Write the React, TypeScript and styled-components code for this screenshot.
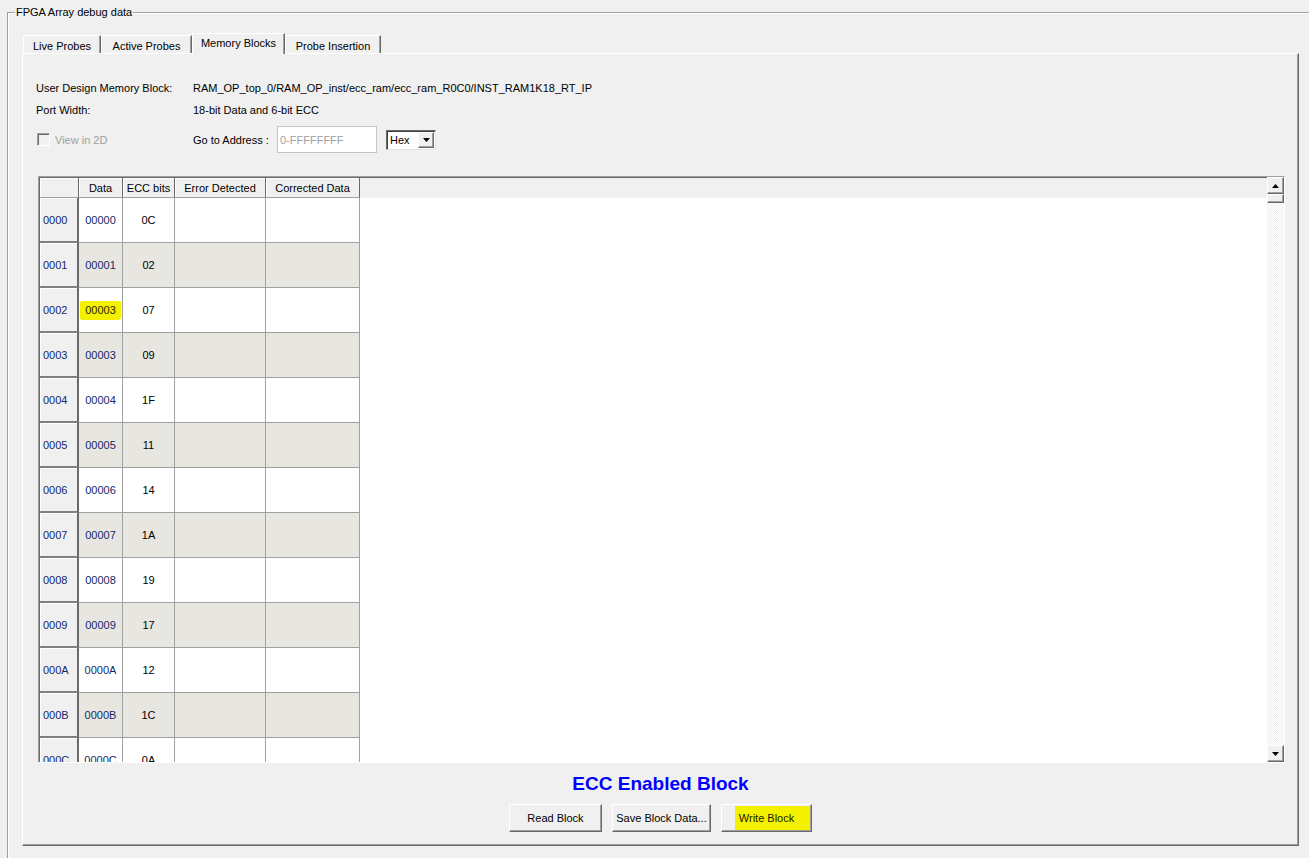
import React from "react";
import styled, { createGlobalStyle, css } from "styled-components";

const GlobalStyle = createGlobalStyle`
  html, body {
    margin: 0;
    padding: 0;
    background: #f0f0f0;
    height: 858px;
    overflow: hidden;
  }
  body {
    font-family: "Liberation Sans", Arial, sans-serif;
    font-size: 11px;
    color: #000;
  }
  * { box-sizing: border-box; }
`;

const Page = styled.div`
  padding: 12px 0 0 7px;
  height: 858px;
  overflow: hidden;
`;

const GroupBox = styled.div`
  position: relative;
  border-top: 1px solid #a0a0a0;
  border-left: 1px solid #a0a0a0;
  box-shadow: inset 1px 1px 0 #fff;
  padding: 20px 0 0 14px;
  min-height: 900px;
`;

const Legend = styled.div`
  position: absolute;
  top: -7px;
  left: 7px;
  padding: 0 1px;
  background: #f0f0f0;
  line-height: 13px;
`;

const TabStrip = styled.div`
  display: flex;
  align-items: flex-end;
  height: 20px;
  padding-left: 1px;
  position: relative;
  z-index: 1;
`;

const Tab = styled.div<{ $active?: boolean; $w: number }>`
  width: ${(p) => p.$w}px;
  height: ${(p) => (p.$active ? 21 : 18)}px;
  margin-bottom: ${(p) => (p.$active ? -1 : 0)}px;
  background: #f0f0f0;
  border-top: 1px solid #fff;
  border-left: 1px solid #fff;
  border-right: 1px solid #696969;
  box-shadow: inset -1px 0 0 #a0a0a0;
  display: flex;
  align-items: center;
  justify-content: center;
  padding-top: ${(p) => (p.$active ? 0 : 2)}px;
  padding-bottom: ${(p) => (p.$active ? 2 : 0)}px;
`;

const Panel = styled.div`
  width: 1277px;
  height: 793px;
  border-top: 1px solid #fff;
  border-left: 1px solid #fff;
  border-right: 1px solid #696969;
  border-bottom: 1px solid #696969;
  box-shadow: inset -1px -1px 0 #a0a0a0;
  display: flex;
  flex-direction: column;
`;

const InfoGrid = styled.div`
  display: grid;
  grid-template-columns: 157px auto;
  row-gap: 8px;
  margin: 27px 0 0 13px;
  line-height: 14px;
`;

const ControlsRow = styled.div`
  display: grid;
  grid-template-columns: 157px auto;
  align-items: center;
  height: 27px;
  margin: 9px 0 0 13px;
`;

const CheckLabel = styled.div`
  display: flex;
  align-items: center;
  gap: 5px;
  padding-left: 1px;
  color: #a0a0a0;
`;

const CheckBox = styled.span`
  width: 13px;
  height: 13px;
  background: #f0f0f0;
  border-top: 1px solid #a0a0a0;
  border-left: 1px solid #a0a0a0;
  border-right: 1px solid #fff;
  border-bottom: 1px solid #fff;
  box-shadow: inset 1px 1px 0 #696969;
`;

const AddressGroup = styled.div`
  display: flex;
  align-items: center;
`;

const AddrLabel = styled.span`
  width: 84px;
`;

const AddrInput = styled.div`
  width: 100px;
  height: 27px;
  background: #fff;
  border: 1px solid #c4c4c4;
  color: #a0a0a0;
  padding-left: 2px;
  display: flex;
  align-items: center;
`;

const Combo = styled.div`
  margin-left: 9px;
  width: 50px;
  height: 20px;
  background: #fff;
  border-top: 1px solid #696969;
  border-left: 1px solid #696969;
  border-right: 1px solid #e3e3e3;
  border-bottom: 1px solid #e3e3e3;
  box-shadow: inset 1px 1px 0 #404040;
  display: flex;
  align-items: center;
  justify-content: space-between;
  padding: 1px 1px 1px 3px;
`;

const raised = css`
  background: #f0f0f0;
  border-top: 1px solid #fff;
  border-left: 1px solid #fff;
  border-right: 1px solid #696969;
  border-bottom: 1px solid #696969;
  box-shadow: inset -1px -1px 0 #a0a0a0;
`;

const ArrowBtn = styled.div<{ $w?: number; $h?: number }>`
  ${raised};
  width: ${(p) => p.$w ?? 16}px;
  height: ${(p) => p.$h ?? 16}px;
  display: flex;
  align-items: center;
  justify-content: center;
  flex-shrink: 0;
`;

const GridFrame = styled.div`
  margin: 23px 0 0 15px;
  width: 1247px;
  height: 587px;
  border-top: 1px solid #a0a0a0;
  border-left: 1px solid #a0a0a0;
  border-right: 1px solid #fff;
  border-bottom: 1px solid #fff;
  display: flex;
`;

const TableArea = styled.div`
  flex: 1;
  overflow: hidden;
  background: #fff;
  border-top: 1px solid #696969;
  border-left: 1px solid #696969;
`;

const cols = "39px 44px 52px 91px 94px";

const HeadRow = styled.div`
  display: grid;
  grid-template-columns: ${cols};
  height: 20px;
  background: #f0f0f0;
`;

const HeadCell = styled.div`
  background: #f0f0f0;
  box-shadow: inset 1px 1px 0 #fff;
  border-right: 1px solid #696969;
  border-bottom: 1px solid #a0a0a0;
  display: flex;
  align-items: center;
  justify-content: center;
`;

const BodyRow = styled.div`
  display: grid;
  grid-template-columns: ${cols};
  height: 45px;
`;

const RowHead = styled.div`
  background: #f0f0f0;
  box-shadow: inset 1px 1px 0 #fff;
  border-right: 2px solid #696969;
  border-bottom: 2px solid #808080;
  display: flex;
  align-items: center;
  padding-left: 3px;
  color: #14286a;
`;

const Cell = styled.div<{ $alt?: boolean; $blue?: boolean }>`
  background: ${(p) => (p.$alt ? "#e8e6e1" : "#fff")};
  border-right: 1px solid #a0a0a0;
  border-bottom: 1px solid #a0a0a0;
  display: flex;
  align-items: center;
  justify-content: center;
  color: ${(p) => (p.$blue ? "#14286a" : "#000")};
`;

const Marked = styled.span`
  background: #f3f000;
  padding: 3px 5px 4px;
  border-radius: 2px 1px 3px 2px;
  color: #2a2a00;
`;

const ScrollBar = styled.div`
  width: 17px;
  display: flex;
  flex-direction: column;
  background: repeating-conic-gradient(#ffffff 0 25%, #f0f0f0 0 50%) 0 0 / 2px 2px;
`;

const Track = styled.div`
  flex: 1;
`;

const Thumb = styled.div`
  ${raised};
  height: 9px;
`;

const Title = styled.div`
  margin-top: 10px;
  text-align: center;
  color: #0000ff;
  font-weight: bold;
  font-size: 19px;
  line-height: 22px;
`;

const ButtonRow = styled.div`
  display: flex;
  justify-content: center;
  gap: 10px;
  margin-top: 9px;
`;

const Button = styled.div<{ $w: number; $marked?: boolean }>`
  ${raised};
  width: ${(p) => p.$w}px;
  height: 28px;
  display: flex;
  align-items: center;
  justify-content: center;
  ${(p) =>
    p.$marked &&
    css`
      background: linear-gradient(#f3f000, #f3f000) 13px 1px / calc(100% - 14px) calc(100% - 2px) no-repeat, #f0f0f0;
      color: #1a1a00;
    `}
`;

const Tri = ({ up }: { up?: boolean }) => (
  <svg width="7" height="4" viewBox="0 0 7 4">
    {up ? <polygon points="0,4 7,4 3.5,0" fill="#000" /> : <polygon points="0,0 7,0 3.5,4" fill="#000" />}
  </svg>
);

const rows: [string, string, string][] = [
  ["0000", "00000", "0C"],
  ["0001", "00001", "02"],
  ["0002", "00003", "07"],
  ["0003", "00003", "09"],
  ["0004", "00004", "1F"],
  ["0005", "00005", "11"],
  ["0006", "00006", "14"],
  ["0007", "00007", "1A"],
  ["0008", "00008", "19"],
  ["0009", "00009", "17"],
  ["000A", "0000A", "12"],
  ["000B", "0000B", "1C"],
  ["000C", "0000C", "0A"],
];

export default function App() {
  return (
    <Page>
      <GlobalStyle />
      <GroupBox>
        <Legend>FPGA Array debug data</Legend>
        <TabStrip>
          <Tab $w={78}>Live Probes</Tab>
          <Tab $w={91}>Active Probes</Tab>
          <Tab $w={93} $active>Memory Blocks</Tab>
          <Tab $w={96}>Probe Insertion</Tab>
        </TabStrip>
        <Panel>
          <InfoGrid>
            <span>User Design Memory Block:</span>
            <span>RAM_OP_top_0/RAM_OP_inst/ecc_ram/ecc_ram_R0C0/INST_RAM1K18_RT_IP</span>
            <span>Port Width:</span>
            <span>18-bit Data and 6-bit ECC</span>
          </InfoGrid>
          <ControlsRow>
            <CheckLabel>
              <CheckBox />
              View in 2D
            </CheckLabel>
            <AddressGroup>
              <AddrLabel>Go to Address :</AddrLabel>
              <AddrInput>0-FFFFFFFF</AddrInput>
              <Combo>
                <span>Hex</span>
                <ArrowBtn $w={16} $h={16}>
                  <Tri />
                </ArrowBtn>
              </Combo>
            </AddressGroup>
          </ControlsRow>
          <GridFrame>
            <TableArea>
              <HeadRow>
                <HeadCell />
                <HeadCell>Data</HeadCell>
                <HeadCell>ECC bits</HeadCell>
                <HeadCell>Error Detected</HeadCell>
                <HeadCell>Corrected Data</HeadCell>
              </HeadRow>
              {rows.map(([addr, data, ecc], i) => {
                const alt = i % 2 === 1;
                return (
                  <BodyRow key={addr}>
                    <RowHead>{addr}</RowHead>
                    <Cell $alt={alt} $blue>
                      {i === 2 ? <Marked>{data}</Marked> : data}
                    </Cell>
                    <Cell $alt={alt}>{ecc}</Cell>
                    <Cell $alt={alt} />
                    <Cell $alt={alt} />
                  </BodyRow>
                );
              })}
            </TableArea>
            <ScrollBar>
              <ArrowBtn $w={17} $h={17}>
                <Tri up />
              </ArrowBtn>
              <Thumb />
              <Track />
              <ArrowBtn $w={17} $h={17}>
                <Tri />
              </ArrowBtn>
            </ScrollBar>
          </GridFrame>
          <Title>ECC Enabled Block</Title>
          <ButtonRow>
            <Button $w={93}>Read Block</Button>
            <Button $w={99}>Save Block Data...</Button>
            <Button $w={91} $marked>
              Write Block
            </Button>
          </ButtonRow>
        </Panel>
      </GroupBox>
    </Page>
  );
}
